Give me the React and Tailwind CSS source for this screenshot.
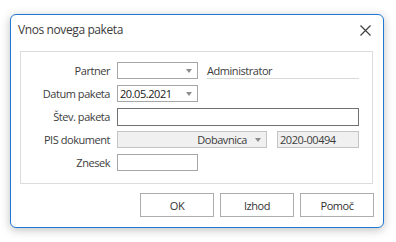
import React from 'react';

const Arrow = () => (
  <span className="w-0 h-0 border-l-[3.5px] border-r-[3.5px] border-t-[4px] border-l-transparent border-r-transparent border-t-[#8c8c8c]" />
);

const Row = ({ label, children }) => (
  <div className="flex items-center h-[17px]">
    <div className="w-[89px] text-right text-[#3c3c3c]">{label}</div>
    <div className="ml-[7px] flex items-center flex-1">{children}</div>
  </div>
);

export default function App() {
  return (
    <div className="w-[396px] h-[242px] bg-white text-[11px] leading-none tracking-[-0.45px]" style={{ fontFamily: '"Open Sans", "Noto Sans", sans-serif' }}>
      <div className="pt-[14px] pl-[10px]">
        <div className="w-[374px] h-[214px] border border-[#1f78d1] rounded-[6px] bg-white shadow-[0_2px_10px_rgba(0,0,0,0.25)] flex flex-col">
          {/* title bar */}
          <div className="h-[27px] flex items-center justify-between pl-[7px] pr-[12px] pt-[2px]">
            <span className="text-[12px] text-[#3b3b3b] tracking-[-0.4px]">Vnos novega paketa</span>
            <svg width="11" height="11" viewBox="0 0 11 11" className="mt-[1px]">
              <path d="M0.5 0.5 L10.5 10.5 M10.5 0.5 L0.5 10.5" stroke="#404040" strokeWidth="1.2" />
            </svg>
          </div>

          {/* group box */}
          <div className="mt-[9px] ml-[9px] w-[353px] h-[133px] border border-[#dcdcdc] pt-[10px] flex flex-col gap-[6px]">
            <Row label="Partner">
              <div className="w-[81px] h-[17px] border border-[#a6a6a6] flex items-center justify-end pr-[5px]">
                <Arrow />
              </div>
              <div className="ml-[9px] w-[152px] h-[17px] border-b border-[#d9d9d9] flex items-center text-[#3c3c3c]">
                Administrator
              </div>
            </Row>
            <Row label="Datum paketa">
              <div className="w-[81px] h-[17px] border border-[#a6a6a6] flex items-center justify-between pl-[2px] pr-[5px] text-[#202020]">
                <span>20.05.2021</span>
                <Arrow />
              </div>
            </Row>
            <Row label="Štev. paketa">
              <div className="w-[242px] h-[18px] border border-[#707070]" />
            </Row>
            <Row label="PIS dokument">
              <div className="w-[150px] h-[17px] border border-[#c4c4c4] bg-[#f0f0f0] flex items-center justify-end pr-[5px] text-[#3c3c3c]">
                <span className="mr-[8px]">Dobavnica</span>
                <Arrow />
              </div>
              <div className="ml-[10px] w-[82px] h-[17px] border border-[#c4c4c4] bg-[#f0f0f0] flex items-center pl-[2px] text-[#3c3c3c]">
                2020-00494
              </div>
            </Row>
            <Row label="Znesek">
              <div className="w-[81px] h-[17px] border border-[#a6a6a6]" />
            </Row>
          </div>

          {/* buttons */}
          <div className="mt-[9px] flex justify-end gap-[6px] pr-[9px]">
            {['OK', 'Izhod', 'Pomoč'].map((t) => (
              <button key={t} className="w-[74px] h-[24px] border border-[#adadad] bg-white text-[#333] text-[11px] tracking-[-0.45px]">
                {t}
              </button>
            ))}
          </div>
        </div>
      </div>
    </div>
  );
}
